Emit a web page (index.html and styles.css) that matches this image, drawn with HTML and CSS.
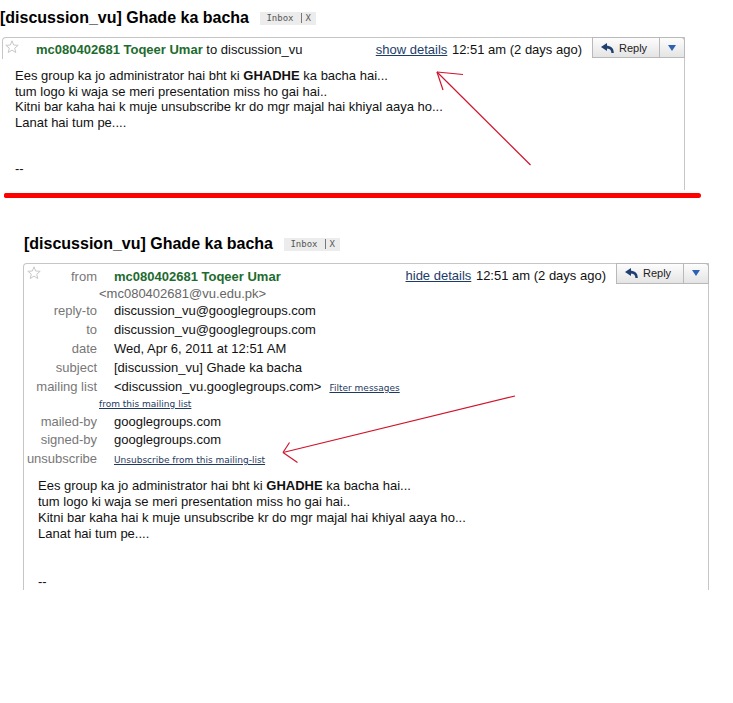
FILE: index.html
```html
<!DOCTYPE html>
<html lang="en">

<head>
    <meta charset="utf-8">
    <title>[discussion_vu] Ghade ka bacha</title>
    <link rel="stylesheet" href="styles.css">
</head>

<body>
    <div class="page">

        <section class="shot shot-top">
            <h1 class="subject">[discussion_vu] Ghade ka bacha <span class="label">Inbox<span class="label-x">X</span></span></h1>

            <div class="msg msg-collapsed">
                <div class="msg-head">
                    <div class="who">
                        <svg class="star" width="14" height="14" viewBox="0 0 14 14"><polygon points="7,0.8 8.65,5.03 13.18,5.29 9.66,8.17 10.82,12.56 7,10.1 3.18,12.56 4.34,8.17 0.82,5.29 5.35,5.03" /></svg>
                        <span><b class="sender">mc080402681 Toqeer Umar</b> to discussion_vu</span>
                    </div>
                    <div class="when"><a href="#">show details</a> 12:51 am (2 days ago)</div>
                    <div class="reply-group">
                        <button class="btn btn-reply">
                            <svg width="13" height="10" viewBox="0 0 13 10"><polygon points="0,4 6,0 6,8" /><path d="M5 2.8 C10 2.8 12.8 5.2 12.8 10 L10.4 10 C10.4 7 8.6 5.6 5 5.6 Z" /></svg>
                            Reply
                        </button>
                        <button class="btn btn-more"><svg width="8" height="6" viewBox="0 0 8 6"><polygon points="0,0 8,0 4,6" /></svg></button>
                    </div>
                </div>
                <div class="msg-body">
                    Ees group ka jo administrator hai bht ki <b>GHADHE</b> ka bacha hai...<br>
                    tum logo ki waja se meri presentation miss ho gai hai..<br>
                    Kitni bar kaha hai k muje unsubscribe kr do mgr majal hai khiyal aaya ho...<br>
                    Lanat hai tum pe....<br>
                    <br>
                    <br>
                    --
                </div>
            </div>
        </section>

        <div class="divider"></div>

        <section class="shot shot-bottom">
            <h1 class="subject">[discussion_vu] Ghade ka bacha <span class="label">Inbox<span class="label-x">X</span></span></h1>

            <div class="msg msg-open">
                <div class="msg-head">
                    <div class="details">
                        <div class="row row-from">
                            <span class="row-label">
                                <svg class="star" width="14" height="14" viewBox="0 0 14 14"><polygon points="7,0.8 8.65,5.03 13.18,5.29 9.66,8.17 10.82,12.56 7,10.1 3.18,12.56 4.34,8.17 0.82,5.29 5.35,5.03" /></svg>
                                from
                            </span>
                            <span class="row-value"><b class="sender">mc080402681 Toqeer Umar</b></span>
                        </div>
                        <div class="row row-indent row-email">&lt;mc080402681@vu.edu.pk&gt;</div>
                        <div class="row row-reply">
                            <span class="row-label">reply-to</span>
                            <span class="row-value">discussion_vu@googlegroups.com</span>
                        </div>
                        <div class="row">
                            <span class="row-label">to</span>
                            <span class="row-value">discussion_vu@googlegroups.com</span>
                        </div>
                        <div class="row">
                            <span class="row-label">date</span>
                            <span class="row-value">Wed, Apr 6, 2011 at 12:51 AM</span>
                        </div>
                        <div class="row">
                            <span class="row-label">subject</span>
                            <span class="row-value">[discussion_vu] Ghade ka bacha</span>
                        </div>
                        <div class="row">
                            <span class="row-label">mailing list</span>
                            <span class="row-value">&lt;discussion_vu.googlegroups.com&gt;<a class="small-link link-filter" href="#">Filter messages</a></span>
                        </div>
                        <div class="row row-indent row-small"><a class="small-link" href="#">from this mailing list</a></div>
                        <div class="row row-mailed">
                            <span class="row-label">mailed-by</span>
                            <span class="row-value">googlegroups.com</span>
                        </div>
                        <div class="row">
                            <span class="row-label">signed-by</span>
                            <span class="row-value">googlegroups.com</span>
                        </div>
                        <div class="row">
                            <span class="row-label">unsubscribe</span>
                            <span class="row-value"><a class="small-link" href="#">Unsubscribe from this mailing-list</a></span>
                        </div>
                    </div>
                    <div class="when"><a href="#">hide details</a> 12:51 am (2 days ago)</div>
                    <div class="reply-group">
                        <button class="btn btn-reply">
                            <svg width="13" height="10" viewBox="0 0 13 10"><polygon points="0,4 6,0 6,8" /><path d="M5 2.8 C10 2.8 12.8 5.2 12.8 10 L10.4 10 C10.4 7 8.6 5.6 5 5.6 Z" /></svg>
                            Reply
                        </button>
                        <button class="btn btn-more"><svg width="8" height="6" viewBox="0 0 8 6"><polygon points="0,0 8,0 4,6" /></svg></button>
                    </div>
                </div>
                <div class="msg-body">
                    Ees group ka jo administrator hai bht ki <b>GHADHE</b> ka bacha hai...<br>
                    tum logo ki waja se meri presentation miss ho gai hai..<br>
                    Kitni bar kaha hai k muje unsubscribe kr do mgr majal hai khiyal aaya ho...<br>
                    Lanat hai tum pe....<br>
                    <br>
                    <br>
                    --
                </div>
            </div>
        </section>

        <!-- hand-drawn red arrows on top of the screenshots -->
        <svg class="marks" width="733" height="703" viewBox="0 0 733 703">
            <line x1="530.5" y1="165" x2="437" y2="72" />
            <line x1="437" y1="72" x2="463" y2="74.5" />
            <line x1="437" y1="72" x2="443" y2="90" />
            <line x1="515" y1="396" x2="283" y2="452.5" />
            <line x1="283" y1="452.5" x2="289.5" y2="442.5" />
            <line x1="283" y1="452.5" x2="297.5" y2="462.5" />
        </svg>
    </div>
</body>

</html>
```

FILE: styles.css
```css
html {
    background-color: #fff;
}

body {
    margin: 0;
    font-family: "Liberation Sans", Arial, sans-serif;
    font-size: 13px;
    color: #111;
}

.page {
    position: relative;
    width: 733px;
    height: 703px;
    overflow: hidden;
}

/* subject line + label */

.subject {
    font-size: 16px;
    line-height: 20px;
    font-weight: bold;
    color: #000;
    margin: 8px 0 9px;
}

.label {
    display: inline-block;
    vertical-align: middle;
    margin-left: 7px;
    padding: 0 5px 0 6px;
    background-color: #ececec;
    color: #555;
    font-family: "DejaVu Sans Mono", monospace;
    font-size: 9px;
    line-height: 13px;
    font-weight: normal;
}

.label-x {
    margin-left: 7px;
    padding-left: 4px;
    border-left: 1px solid #777;
}

/* message card */

.msg {
    border-color: #c6c6c6;
    border-style: solid;
    border-width: 0;
}

.msg-collapsed {
    margin-left: 2px;
    width: 682px;
    border-right-width: 1px;
}

.msg-collapsed .msg-head {
    border-top: 1px solid #c6c6c6;
    border-left: 1px solid #c6c6c6;
    border-top-left-radius: 4px;
}

.msg-open {
    width: 684px;
    border-width: 1px 1px 0 1px;
    border-top-left-radius: 4px;
}

.msg-head {
    display: flex;
    align-items: flex-start;
}

.who {
    flex: 1;
    display: flex;
    align-items: flex-start;
    padding-top: 2px;
    line-height: 19px;
}

.star {
    display: block;
    fill: none;
    stroke: #c8c8c8;
    stroke-width: 1;
}

.who .star {
    margin: 0 17px 0 2px;
}

.sender {
    color: #1d6b2e;
}

.when {
    padding-top: 2px;
    line-height: 19px;
    white-space: nowrap;
}

.when a {
    color: #1c3d6b;
    text-decoration: underline;
    margin-right: 1px;
}

.reply-group {
    display: flex;
    margin: -1px -1px 0 10px;
}

.btn {
    box-sizing: border-box;
    height: 21px;
    display: flex;
    align-items: center;
    border: 1px solid #b9b9b9;
    background: linear-gradient(#fdfdfd, #e4e4e4);
    font-family: "Liberation Sans", Arial, sans-serif;
    font-size: 11px;
    color: #222;
    cursor: pointer;
}

.btn-reply {
    width: 68px;
    padding: 0 0 0 8px;
    gap: 5px;
}

.btn-reply svg {
    fill: #1f3f73;
}

.btn-more {
    width: 25px;
    padding: 0;
    border-left: 0;
    border-top-right-radius: 4px;
    justify-content: center;
}

.btn-more svg {
    fill: #2a63b5;
}

.msg-body {
    padding: 9px 0 13px 13px;
    line-height: 15.5px;
}

/* divider drawn between the two screenshots */

.divider {
    margin: 3px 0 0 4px;
    width: 697px;
    height: 5px;
    background-color: #f00;
    border-radius: 2px 3px 3px 2px;
}

/* expanded message */

.shot-bottom {
    margin-left: 23px;
}

.shot-bottom .subject {
    margin: 36px 0 9px 1px;
}

.details {
    flex: 1;
    padding-top: 3px;
}

.row {
    display: flex;
    line-height: 19px;
    height: 19px;
    white-space: nowrap;
}

.row-label {
    width: 73px;
    flex: none;
    display: flex;
    justify-content: flex-end;
    color: #777;
}

.row-from .row-label {
    justify-content: space-between;
}

.row-from .star {
    margin: -1px 0 0 3px;
}

.row-value {
    margin-left: 17px;
}

.row-indent {
    padding-left: 75px;
}

.row-email {
    height: 16px;
    line-height: 16px;
    color: #666;
}

.row-reply {
    height: 18px;
    line-height: 18px;
}

.row-small {
    height: 17px;
    line-height: 17px;
}

.row-mailed {
    height: 17px;
    line-height: 17px;
}

.small-link {
    font-family: "DejaVu Sans", Verdana, sans-serif;
    font-size: 9px;
    color: #1f3a5f;
    text-decoration: underline;
}

.link-filter {
    margin-left: 8px;
}

.shot-bottom .msg-body {
    padding: 10px 0 0 14px;
    line-height: 16px;
}

.marks {
    position: absolute;
    top: 0;
    left: 0;
    pointer-events: none;
}

.marks line {
    stroke: #d0142c;
    stroke-width: 1.2;
}
```
